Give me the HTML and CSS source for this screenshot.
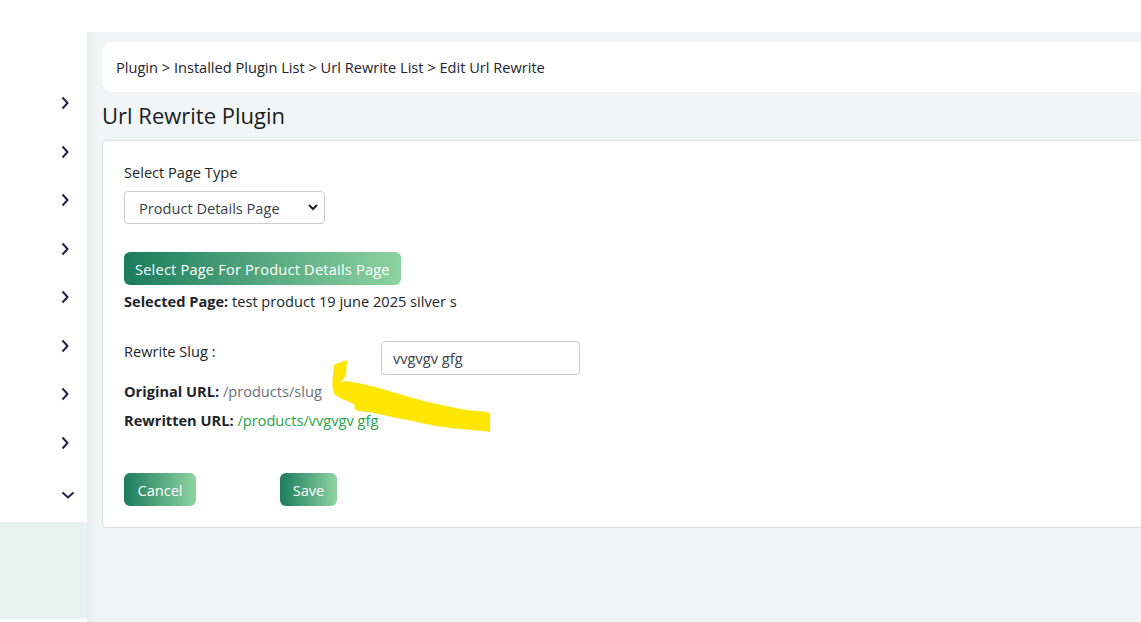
FILE: index.html
```html
<!DOCTYPE html>
<html lang="en">
<head>
    <meta charset="UTF-8">
    <meta name="viewport" content="width=device-width, initial-scale=1.0">
    <title>Url Rewrite Plugin</title>
    <link rel="stylesheet" href="styles.css">
</head>
<body>
    <div class="topbar"></div>

    <div class="layout">
        <aside class="sidebar">
            <ul class="menu">
                <li><svg class="chev" viewBox="0 0 8 14"><path d="M1.5 1.5l5 5.5-5 5.5"/></svg></li>
                <li><svg class="chev" viewBox="0 0 8 14"><path d="M1.5 1.5l5 5.5-5 5.5"/></svg></li>
                <li><svg class="chev" viewBox="0 0 8 14"><path d="M1.5 1.5l5 5.5-5 5.5"/></svg></li>
                <li><svg class="chev" viewBox="0 0 8 14"><path d="M1.5 1.5l5 5.5-5 5.5"/></svg></li>
                <li><svg class="chev" viewBox="0 0 8 14"><path d="M1.5 1.5l5 5.5-5 5.5"/></svg></li>
                <li><svg class="chev" viewBox="0 0 8 14"><path d="M1.5 1.5l5 5.5-5 5.5"/></svg></li>
                <li><svg class="chev" viewBox="0 0 8 14"><path d="M1.5 1.5l5 5.5-5 5.5"/></svg></li>
                <li><svg class="chev" viewBox="0 0 8 14"><path d="M1.5 1.5l5 5.5-5 5.5"/></svg></li>
                <li class="open"><svg class="chev-down" viewBox="0 0 14 8"><path d="M1.5 1.5l5.5 5 5.5-5"/></svg></li>
            </ul>
            <div class="submenu"></div>
        </aside>

        <main class="content">
            <div class="breadcrumb">
                Plugin &gt; Installed Plugin List &gt; Url Rewrite List &gt; Edit Url Rewrite
            </div>

            <h1 class="page-title">Url Rewrite Plugin</h1>

            <div class="card">
                <label class="field-label" for="pageType">Select Page Type</label>
                <div class="select-wrap">
                    <select id="pageType">
                        <option>Product Details Page</option>
                        <option>Category Page</option>
                        <option>Custom Page</option>
                    </select>
                    <svg class="select-arrow" viewBox="0 0 12 8"><path d="M2 2l4 4 4-4"/></svg>
                </div>

                <button class="btn btn-wide" type="button">Select Page For Product Details Page</button>
                <p class="selected"><b>Selected Page:</b> test product 19 june 2025 silver s</p>

                <div class="slug-row">
                    <label for="slug">Rewrite Slug :</label>
                    <input type="text" id="slug" value="vvgvgv gfg">
                </div>

                <p class="url-line"><b>Original URL:</b> <span class="url-old">/products/slug</span></p>
                <p class="url-line"><b>Rewritten URL:</b> <span class="url-new">/products/vvgvgv gfg</span></p>

                <div class="actions">
                    <button class="btn btn-cancel" type="button">Cancel</button>
                    <button class="btn btn-save" type="submit">Save</button>
                </div>

                <!-- marker stroke pointing at the original url -->
                <svg class="marker" width="170" height="80" viewBox="0 0 170 80">
                    <path d="M9 5 C13 3 18 1 22 0 L21 15 C19 19 17 21 15 22 L22 21 C40 24 55 28 67 32 C85 37 100 42 117 45 C130 48 140 50 150 51 C158 51 162 52 165 53 L165 72 C158 71 152 70 147 70 C135 69 125 68 117 67 C100 64 88 61 77 59 C62 56 50 53 42 52 C36 51 32 51 30 50 L29 44 C22 41 14 38 9 34 C7 28 7 20 8 14 Z"/>
                </svg>
            </div>
        </main>
    </div>
</body>
</html>
```

FILE: styles.css
```css
body {
    margin: 0;
    font-family: "Open Sans", Arial, sans-serif;
    font-size: 14.6px;
    color: #212529;
    background: #fff;
    overflow: hidden;
}

.topbar {
    height: 32px;
    background: #fff;
}

.layout {
    display: flex;
    height: 590px;
}

/* sidebar */
.sidebar {
    width: 87px;
    flex-shrink: 0;
    background: #fff;
}

.menu {
    list-style: none;
    margin: 0;
    padding: 47px 0 0;
}

.menu li {
    height: 48.5px;
    display: flex;
    align-items: center;
    justify-content: flex-end;
    padding-right: 18px;
}

.chev {
    width: 8px;
    height: 14px;
    fill: none;
    stroke: #2d1a4d;
    stroke-width: 2;
}

.menu li.open {
    height: 32px;
    padding-top: 12px;
    padding-right: 12px;
}

.chev-down {
    width: 14px;
    height: 8px;
    fill: none;
    stroke: #2d1a4d;
    stroke-width: 2;
}

.submenu {
    height: 97px;
    margin-top: 11px;
    background: #e7f1ee;
}

/* main area */
.content {
    flex: 1;
    min-width: 0;
    background: #f1f5f5;
    box-shadow: inset 12px 0 10px -8px rgba(0, 0, 0, 0.05);
    padding: 10px 0 0 15px;
}

.breadcrumb {
    background: #fff;
    height: 50px;
    border-radius: 10px;
    margin-right: -20px;
    padding-left: 14px;
    display: flex;
    align-items: center;
    color: #1f2330;
}

.page-title {
    margin: 9px 0 0;
    height: 39px;
    font-size: 22px;
    font-weight: 500;
    line-height: 28px;
    color: #1a1c22;
}

.card {
    position: relative;
    background: #fff;
    border: 1px solid #dcdfe0;
    border-radius: 4px;
    margin-right: -20px;
    padding: 20px 21px 20px;
    height: 346px;
}

.field-label {
    display: block;
    line-height: 22px;
    margin-bottom: 8px;
}

.select-wrap {
    position: relative;
    width: 201px;
}

select {
    appearance: none;
    width: 201px;
    height: 33px;
    border: 1px solid #c9ccd1;
    border-radius: 4px;
    background: #fff;
    font-family: inherit;
    font-size: 14.6px;
    color: #3a3f4a;
    padding: 0 0 0 14px;
}

.select-arrow {
    position: absolute;
    right: 6px;
    top: 12px;
    width: 12px;
    height: 8px;
    fill: none;
    stroke: #222;
    stroke-width: 2;
    pointer-events: none;
}

.btn {
    border: none;
    border-radius: 6px;
    height: 33px;
    padding: 0 11px;
    font-family: inherit;
    font-size: 14.6px;
    color: #fff;
    background: linear-gradient(90deg, #1b7c5d, #8ed3a1);
    cursor: pointer;
}

.btn-wide {
    margin-top: 28px;
    letter-spacing: 0.2px;
}

.btn-cancel {
    width: 72px;
}

.btn-save {
    width: 57px;
}

.selected {
    margin: 6px 0 0;
    line-height: 20px;
}

.selected b,
.url-line b {
    font-weight: 700;
}

.slug-row {
    display: flex;
    align-items: flex-start;
    margin-top: 30px;
}

.slug-row label {
    width: 257px;
    line-height: 20px;
}

.slug-row input {
    width: 199px;
    height: 34px;
    box-sizing: border-box;
    border: 1px solid #c9ccd1;
    border-radius: 4px;
    padding: 0 11px;
    font-family: inherit;
    font-size: 14.6px;
    color: #3a3f4a;
}

.url-line {
    margin: 0;
    line-height: 20px;
}

.slug-row + .url-line {
    margin-top: 6px;
}

.url-line + .url-line {
    margin-top: 9px;
}

.url-old {
    color: #6b6f78;
}

.url-new {
    color: #2aa34a;
}

.actions {
    display: flex;
    gap: 84px;
    margin-top: 43px;
}

.marker {
    position: absolute;
    left: 222px;
    top: 219px;
    fill: #ffe600;
    pointer-events: none;
}
```
